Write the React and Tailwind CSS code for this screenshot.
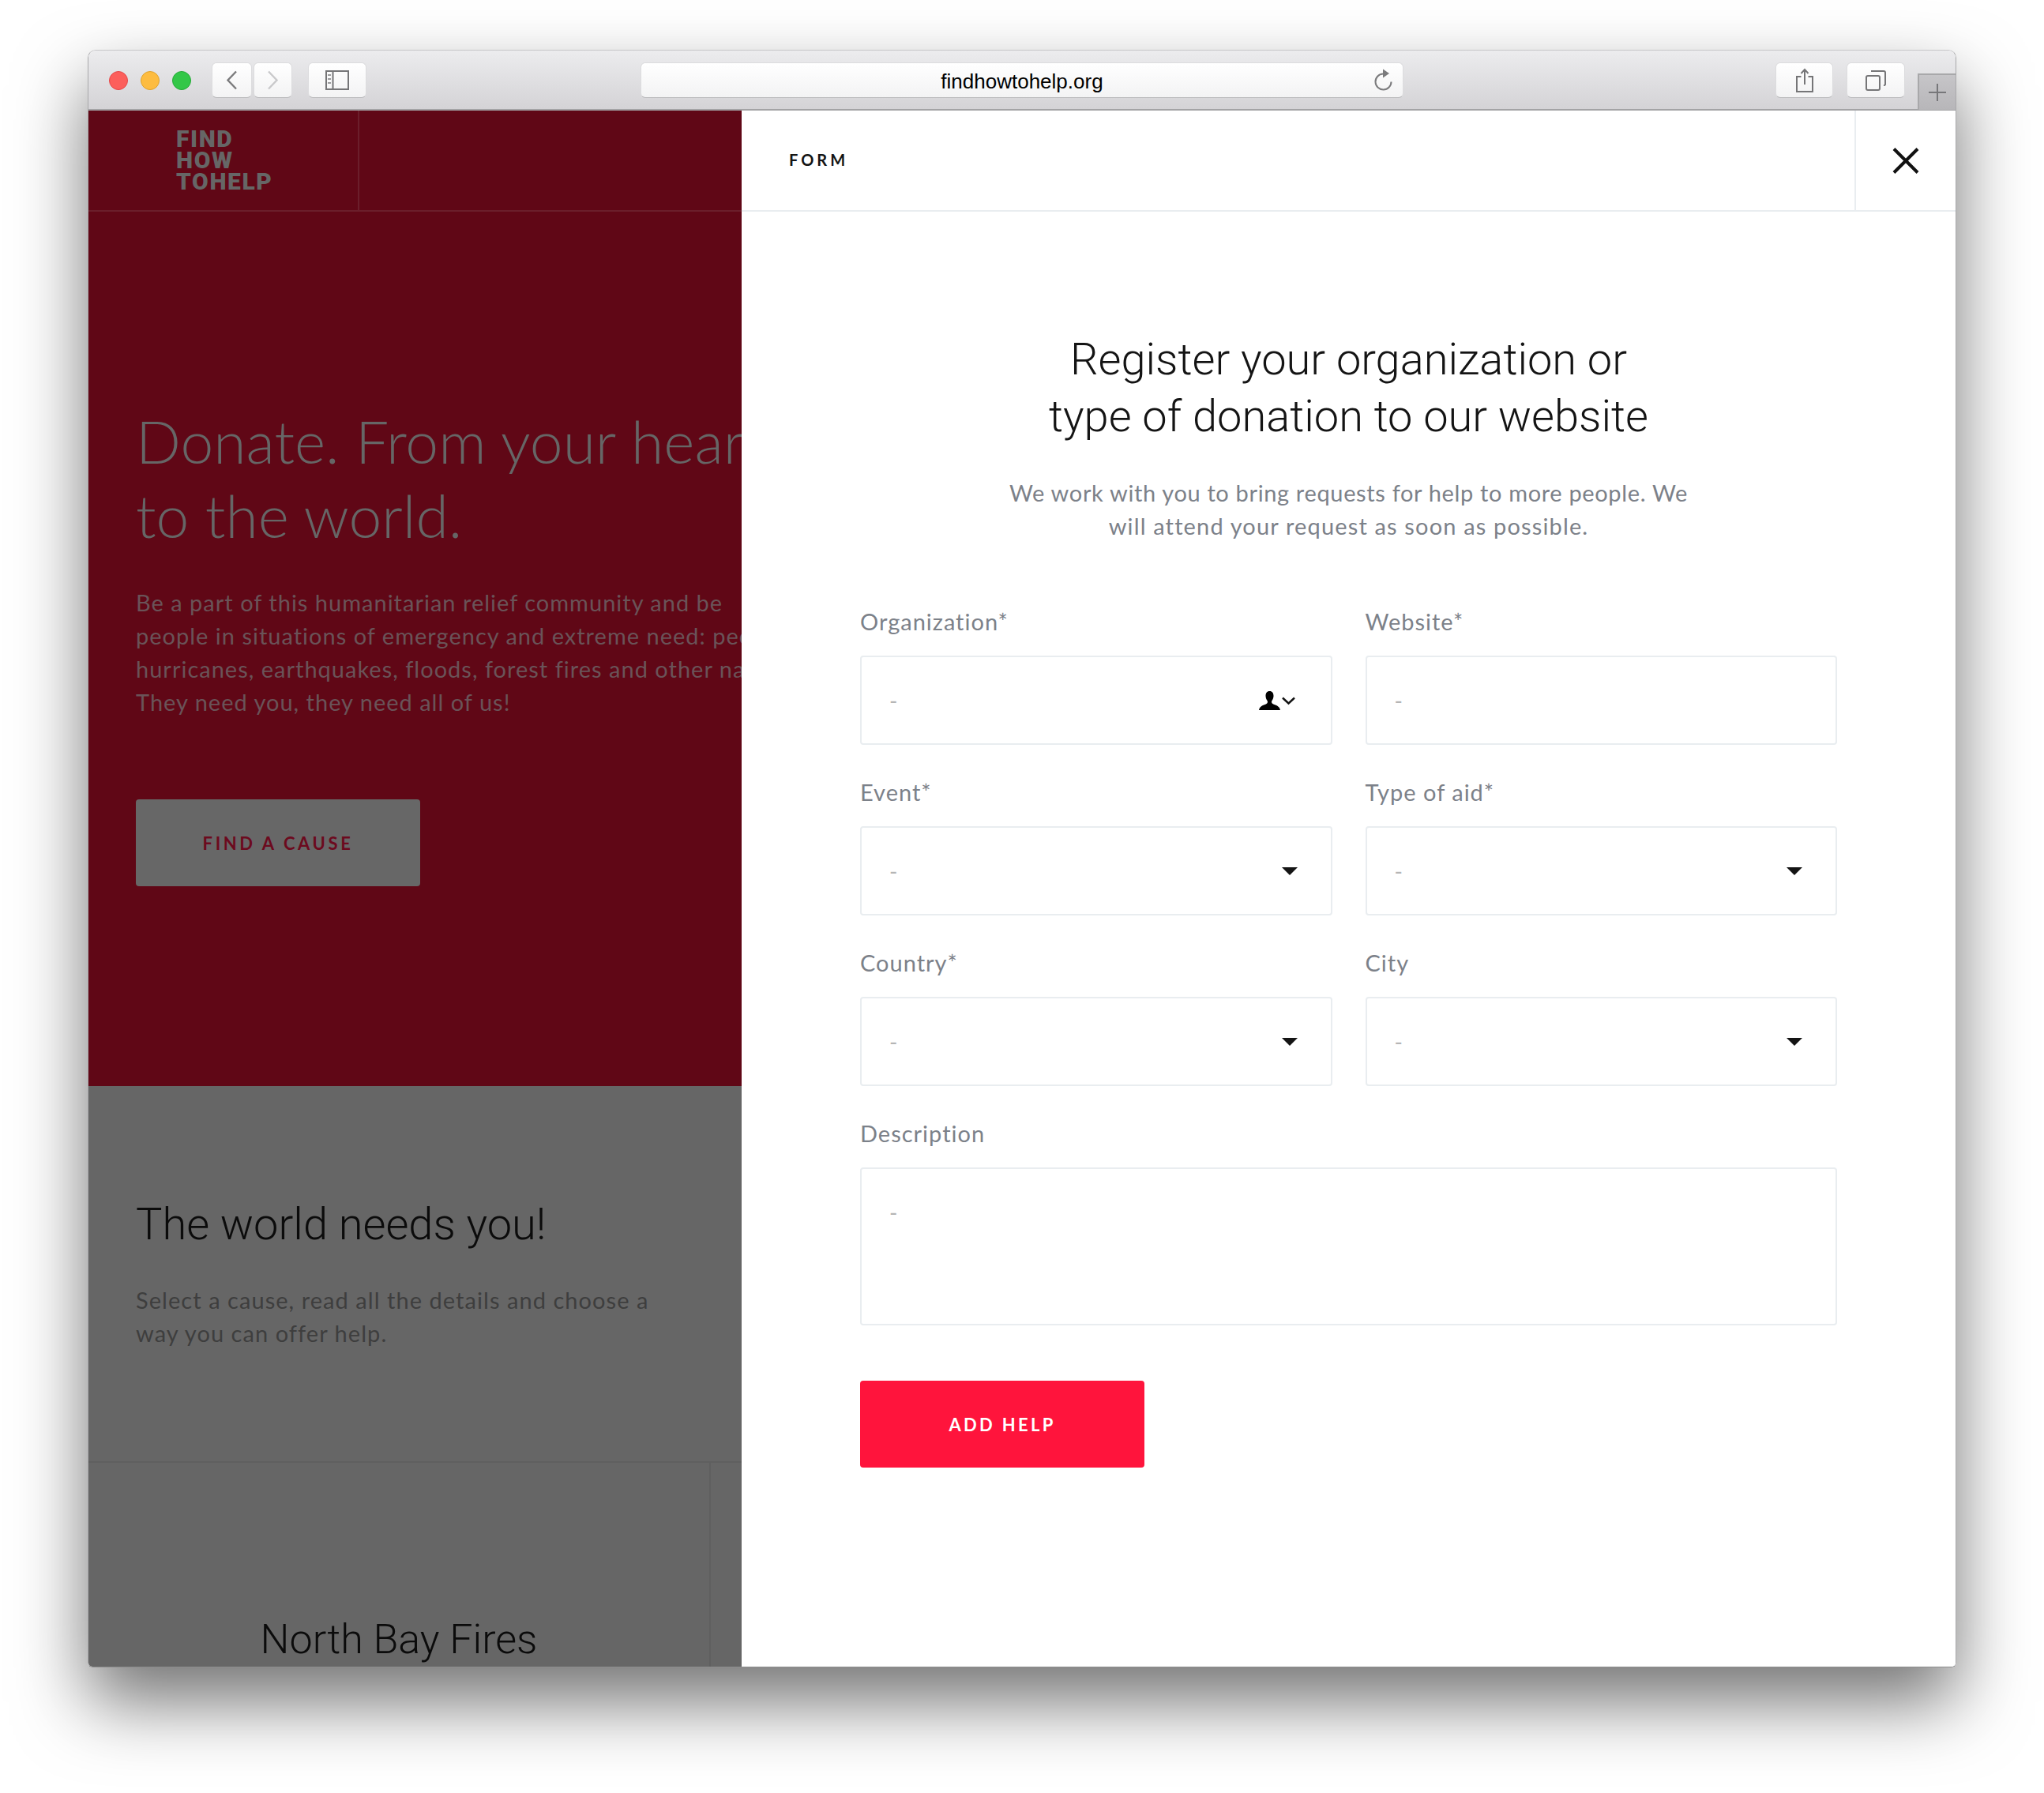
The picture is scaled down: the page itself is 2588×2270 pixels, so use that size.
import React from 'react';

const karla = "font-['Lato',sans-serif]";
const heebo = "font-['Roboto',sans-serif]";

const toolBtn =
  'flex h-[45px] items-center justify-center rounded-[6px] border border-[#dcdcde] border-b-[#bdbdbf] bg-gradient-to-b from-white to-[#f3f3f4]';

const TrafficLights = () => (
  <div className="flex items-center gap-[16px]">
    <div className="h-[24px] w-[24px] rounded-full border border-[#e5484a] bg-[#fc5f5c]" />
    <div className="h-[24px] w-[24px] rounded-full border border-[#e0a32c] bg-[#fdbc40]" />
    <div className="h-[24px] w-[24px] rounded-full border border-[#27aa38] bg-[#33c748]" />
  </div>
);

const BrowserBar = () => (
  <div className="flex h-[76px] shrink-0 items-start border-b-2 border-[#a3a3a5] bg-gradient-to-b from-[#ececee] to-[#d4d3d6] pl-[26px] pt-[15px]">
    <div className="flex h-[45px] items-center">
      <TrafficLights />
    </div>
    <div className={`${toolBtn} ml-[26px] w-[51px]`}>
      <svg width="15" height="25" viewBox="0 0 15 25" fill="none" stroke="#7b7b7d" strokeWidth="2.4">
        <path d="M13 1.5 2.5 12.5 13 23.5" />
      </svg>
    </div>
    <div className={`${toolBtn} ml-[2px] w-[49px]`}>
      <svg width="15" height="25" viewBox="0 0 15 25" fill="none" stroke="#c9c9cb" strokeWidth="2.4">
        <path d="M2 1.5 12.5 12.5 2 23.5" />
      </svg>
    </div>
    <div className={`${toolBtn} ml-[20px] w-[74px]`}>
      <svg width="30" height="25" viewBox="0 0 30 25" fill="none" stroke="#757577" strokeWidth="2">
        <rect x="1" y="1" width="28" height="23" />
        <path d="M9.5 1v23" />
        <path d="M3 6h4M3 11h4M3 16h4" strokeWidth="2" stroke="#9a9a9c" />
      </svg>
    </div>
    <div className={`${toolBtn} relative ml-[347px] w-[966px]`}>
      <span className="relative top-[1px] font-['Liberation_Sans',sans-serif] text-[26px] leading-none text-black">findhowtohelp.org</span>
      <svg className="absolute right-[12px] top-[7px]" width="24" height="28" viewBox="0 0 24 28" fill="none">
        <path d="M11 6.5a10 10 0 1 0 10.5 10" stroke="#7b7b7d" strokeWidth="2" />
        <path d="M11 0.5 19 6 11 11.5Z" fill="#7b7b7d" />
      </svg>
    </div>
    <div className={`${toolBtn} ml-[471px] w-[73px]`}>
      <svg width="24" height="32" viewBox="0 0 24 32" fill="none" stroke="#757577" strokeWidth="2">
        <path d="M7.5 11H2v19h20V11h-5.500" />
        <path d="M12 21V2M7.500 7 12 2l4.500 5" />
      </svg>
    </div>
    <div className={`${toolBtn} ml-[17px] w-[74px]`}>
      <svg width="26" height="26" viewBox="0 0 26 26" fill="none" stroke="#757577" strokeWidth="2">
        <rect x="1" y="7" width="17" height="18" rx="2" />
        <path d="M7 1h16a2 2 0 0 1 2 2v15a2 2 0 0 1-2 1" />
      </svg>
    </div>
    <div className="ml-[16px] mt-[14px] flex h-[46px] flex-1 items-center justify-center border-l-2 border-t-2 border-[#a8a8aa] bg-gradient-to-b from-[#c6c5c8] to-[#b7b6b9]">
      <svg width="24" height="24" viewBox="0 0 24 24" fill="none" stroke="#77777a" strokeWidth="2">
        <path d="M12 1v22M1 12h22" />
      </svg>
    </div>
  </div>
);

const LeftPage = () => (
  <div className="flex w-[827px] shrink-0 flex-col overflow-hidden bg-[#666666]">
    <div className="flex h-[1235px] shrink-0 flex-col bg-[#600716]">
      <div className="flex h-[128px] shrink-0 border-b-2 border-[#6b1e2b]">
        <div className={`w-[343px] border-r-2 border-[#6b1e2b] pl-[111px] pt-[22px] ${heebo} text-[30px] font-black leading-[27px] tracking-[1.6px] text-[#666666]`}>
          <div>FIND</div>
          <div>HOW</div>
          <div>TOHELP</div>
        </div>
      </div>
      <div className="pl-[60px] pt-[243px]">
        <h1 className={`${karla} whitespace-nowrap text-[75px] font-light leading-[94px] text-[#666666]`}>
          Donate. From your heart
          <br />
          to the world.
        </h1>
        <p className={`${karla} mt-[43px] whitespace-nowrap text-[29px] leading-[42px] tracking-[1px] text-[#6a5358]`}>
          Be a part of this humanitarian relief community and be
          <br />
          people in situations of emergency and extreme need: people
          <br />
          hurricanes, earthquakes, floods, forest fires and other natural
          <br />
          They need you, they need all of us!
        </p>
        <div className="mt-[102px] flex h-[110px] w-[360px] items-center justify-center rounded-[4px] bg-[#676767]">
          <span className={`${karla} text-[22px] font-bold tracking-[3.6px] text-[#6c0a1e]`}>FIND A CAUSE</span>
        </div>
      </div>
    </div>
    <div className="flex flex-1 flex-col">
      <div className="h-[477px] shrink-0 border-b-2 border-[#5f5f5f] pl-[60px] pt-[139px]">
        <h2 className={`${heebo} text-[56px] font-light leading-[72px] text-[#0b0b0b]`}>The world needs you!</h2>
        <p className={`${karla} mt-[39px] text-[29px] leading-[42px] tracking-[1.05px] text-[#3e3e3e]`}>
          Select a cause, read all the details and choose a
          <br />
          way you can offer help.
        </p>
      </div>
      <div className="flex flex-1">
        <div className="w-[788px] shrink-0 overflow-hidden border-r-2 border-[#5f5f5f] pt-[194px] text-center">
          <h3 className={`${heebo} text-[52px] font-light leading-[60px] text-[#0b0b0b]`}>North Bay Fires</h3>
        </div>
      </div>
    </div>
  </div>
);

const Field = ({ label, icon, className = '', box = 'h-[113px] items-center' }) => (
  <div className={className}>
    <label className={`${karla} block text-[29px] leading-[42px] tracking-[1px] text-[#7c8189]`}>{label}</label>
    <div className={`mt-[22px] flex justify-between rounded-[4px] border-2 border-[#e9edf0] bg-white pl-[35px] pr-[42px] ${box}`}>
      <span className={`${karla} text-[28px] leading-[42px] text-[#b5b5b5]`}>-</span>
      {icon}
    </div>
  </div>
);

const Caret = () => (
  <svg width="20" height="10" viewBox="0 0 20 10" fill="#141414">
    <path d="M0 0h20L10 10Z" />
  </svg>
);

const PersonChevron = () => (
  <svg className="mr-[3px]" width="46" height="24" viewBox="0 0 46 24">
    <path
      fill="#000"
      d="M13.500 0c3.400 0 5 2.600 5 6 0 2.400-.9 4.900-2.300 6.400-.5 1.800.2 3.200 2 4 3.200 1.400 7.800 2.300 8.800 7.600H0c1-5.300 5.600-6.200 8.800-7.600 1.800-.8 2.500-2.200 2-4C9.400 10.900 8.500 8.400 8.500 6c0-3.400 1.600-6 5-6Z"
    />
    <path d="M30 8.500 37.500 15.500 45 8.500" fill="none" stroke="#111" strokeWidth="2.400" />
  </svg>
);

const FormPanel = () => (
  <div className="flex flex-1 flex-col bg-white">
    <div className="flex h-[128px] shrink-0 border-b-2 border-[#e9edf0]">
      <div className={`flex flex-1 items-center pb-[2px] pl-[60px] ${karla} text-[20px] font-bold tracking-[4px] text-[#141414]`}>FORM</div>
      <div className="flex w-[128px] items-center justify-center border-l-2 border-[#e9edf0]">
        <svg width="34" height="33" viewBox="0 0 34 33" fill="none" stroke="#111" strokeWidth="4">
          <path d="M2 1.500 32 31.500M32 1.500 2 31.500" />
        </svg>
      </div>
    </div>
    <div className="px-[150px] pt-[151px]">
      <h2 className={`${heebo} text-center text-[56px] font-light leading-[72px] text-[#141414]`}>
        Register your organization or
        <br />
        type of donation to our website
      </h2>
      <p className={`${karla} mt-[40px] text-center text-[29px] leading-[42px] tracking-[0.65px] text-[#7c8189]`}>
        We work with you to bring requests for help to more people. We
        <br />
        <span className="tracking-[1.15px]">will attend your request as soon as possible.</span>
      </p>
      <div className="mt-[79px] grid grid-cols-2 gap-x-[42px] gap-y-[39px]">
        <Field label="Organization*" icon={<PersonChevron />} />
        <Field label="Website*" />
        <Field label="Event*" icon={<Caret />} />
        <Field label="Type of aid*" icon={<Caret />} />
        <Field label="Country*" icon={<Caret />} />
        <Field label="City" icon={<Caret />} />
        <Field label="Description" className="col-span-2" box="h-[200px] items-start pt-[34px]" />
      </div>
      <button className="mt-[70px] flex h-[110px] w-[360px] items-center justify-center rounded-[4px] bg-[#ff143c]">
        <span className={`${karla} text-[22px] font-bold tracking-[3.3px] text-white`}>ADD HELP</span>
      </button>
    </div>
  </div>
);

const App = () => (
  <div className="h-[2270px] w-[2588px] overflow-hidden bg-white pl-[111px] pt-[63px]">
    <div className="flex h-[2048px] w-[2366px] flex-col overflow-hidden rounded-t-[10px] rounded-b-[6px] border border-t-[#c6c6c8] border-x-[#a9a9ab] border-b-[#8c8c8c] shadow-[0_44px_90px_rgba(0,0,0,0.55)]">
      <BrowserBar />
      <div className="flex min-h-0 flex-1">
        <LeftPage />
        <FormPanel />
      </div>
    </div>
  </div>
);

export default App;
